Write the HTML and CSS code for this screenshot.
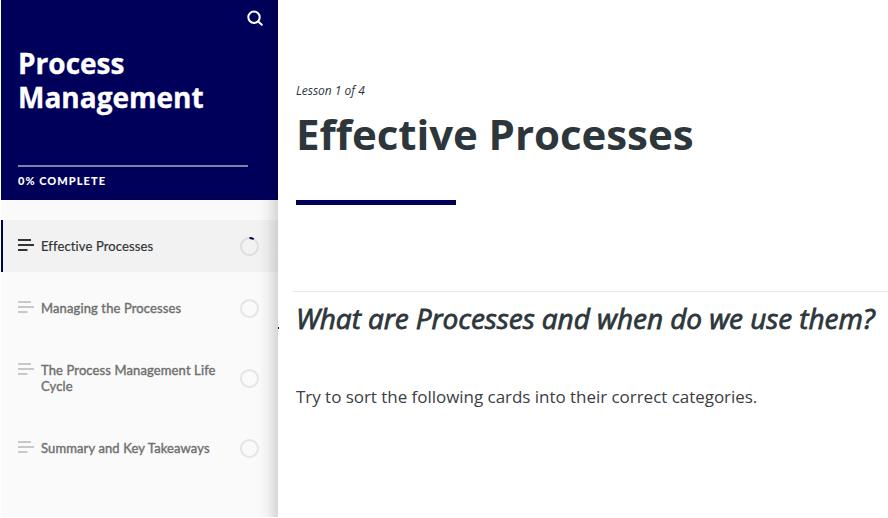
FILE: index.html
```html
<!DOCTYPE html>
<html lang="en">
<head>
<meta charset="utf-8">
<title>Process Management</title>
<link rel="stylesheet" href="styles.css">
</head>
<body>
<div class="app">
  <aside class="sidebar">
    <header class="cover">
      <svg class="search" viewBox="0 0 18 18"><circle cx="8" cy="7.300" r="5.700"/><path d="M12.200 11.500L15.800 14.800"/></svg>
      <h2 class="course">Process<br>Management</h2>
      <div class="track"></div>
      <div class="complete">0% COMPLETE</div>
    </header>
    <nav class="lessons">
      <a class="lesson active">
        <svg class="lines" viewBox="0 0 16 12"><path d="M0 0h13v2H0zM0 5h16v2H0zM0 10h9.500v2H0z"/></svg>
        <span class="name">Effective Processes</span>
        <svg class="ring" viewBox="0 0 19 19"><circle cx="9.500" cy="9.500" r="8.500"/><path d="M9.500 1A8.500 8.500 0 0 1 13.700 2.100"/></svg>
      </a>
      <a class="lesson">
        <svg class="lines" viewBox="0 0 16 12"><path d="M0 0h13v2H0zM0 5h16v2H0zM0 10h9.500v2H0z"/></svg>
        <span class="name">Managing the Processes</span>
        <svg class="ring" viewBox="0 0 19 19"><circle cx="9.500" cy="9.500" r="8.500"/></svg>
      </a>
      <a class="lesson">
        <svg class="lines" viewBox="0 0 16 12"><path d="M0 0h13v2H0zM0 5h16v2H0zM0 10h9.500v2H0z"/></svg>
        <span class="name">The Process Management Life<br>Cycle</span>
        <svg class="ring" viewBox="0 0 19 19"><circle cx="9.500" cy="9.500" r="8.500"/></svg>
      </a>
      <a class="lesson">
        <svg class="lines" viewBox="0 0 16 12"><path d="M0 0h13v2H0zM0 5h16v2H0zM0 10h9.500v2H0z"/></svg>
        <span class="name">Summary and Key Takeaways</span>
        <svg class="ring" viewBox="0 0 19 19"><circle cx="9.500" cy="9.500" r="8.500"/></svg>
      </a>
    </nav>
  </aside>
  <main class="page">
    <p class="count">Lesson 1 of 4</p>
    <h1 class="title">Effective Processes</h1>
    <div class="accent"></div>
    <section class="block">
      <h3 class="question">What are Processes and when do we use them?</h3>
      <p class="body">Try to sort the following cards into their correct categories.</p>
    </section>
    <span class="tick"></span>
  </main>
</div>
</body>
</html>
```
FILE: styles.css
```css
* { box-sizing: border-box; }
body { margin: 0; background: #fff; overflow: hidden; }
h1, h2, h3, p { margin: 0; white-space: nowrap; }
.app { display: flex; height: 518px; padding-left: 1px; font-family: "Open Sans", sans-serif; color: #2d363b; }
.sidebar { position: relative; width: 277px; height: 517px; flex: none; background: #fafafa; }
.sidebar::after {
  content: ""; position: absolute; top: 0; right: 0; width: 20px; height: 100%;
  background: linear-gradient(to right, rgba(0,0,0,0), rgba(0,0,0,.035) 45%, rgba(0,0,0,.14));
}
.cover { display: flex; flex-direction: column; height: 200px; padding: 10px 30px 0 17px; background: #00005b; color: #fff; }
.search { width: 18px; height: 18px; align-self: flex-end; margin-right: -16px; fill: none; stroke: #fff; stroke-width: 2; stroke-linecap: round; }
.course { margin-top: 18px; font-size: 28px; line-height: 34px; font-weight: 700; -webkit-text-stroke: .35px #fff; }
.track { height: 2px; margin-top: 51px; background: #8080ad; }
.complete { margin-top: 7px; font: 900 11px/14px Lato, sans-serif; letter-spacing: 1.05px; }
.lessons { display: flex; flex-direction: column; gap: 10px; padding-top: 20px; }
.lesson { display: flex; align-items: center; min-height: 52px; padding: 18px 19px 18px 17px; color: #707070; }
.active { padding-left: 15px; border-left: 2px solid #00005b; background: #f2f2f2; color: #313537; }
.lines { width: 16px; height: 12px; flex: none; align-self: flex-start; margin: 1px 7px 0 0; fill: #c8c8c8; }
.active .lines { fill: #313537; }
.name { flex: 1; font: 400 13px/16px Lato, sans-serif; letter-spacing: .12px; -webkit-text-stroke: .4px currentColor; font-variant-ligatures: none; white-space: nowrap; }
.active .name { -webkit-text-stroke-width: .2px; }
.ring { width: 19px; height: 19px; flex: none; margin: -1px 0 -2px; fill: none; stroke: #e5e5e5; stroke-width: 2; }
.active .ring { stroke: #dedede; }
.active .ring path { stroke: #00005b; }
.page { position: relative; flex: 1; min-width: 0; padding: 82px 0 0 18px; }
.count { font-size: 12px; line-height: 17px; font-style: italic; }
.title { margin-top: 6px; font-size: 42px; line-height: 58px; font-weight: 700; letter-spacing: -.05px; }
.accent { width: 160px; height: 5px; margin-top: 37px; background: #00005b; }
.block { margin: 86px 0 0 -4px; padding: 6px 0 0 4px; border-top: 1px solid #e8e8e8; }
.question { font-size: 28px; line-height: 40px; font-weight: 400; font-style: italic; letter-spacing: -.07px; -webkit-text-stroke: .8px currentColor; }
.body { margin-top: 47px; font-size: 17px; line-height: 24px; letter-spacing: -.035px; color: #3b4043; }
.tick { position: absolute; left: 0; top: 327px; width: 1px; height: 2px; background: #00005b; }
```
